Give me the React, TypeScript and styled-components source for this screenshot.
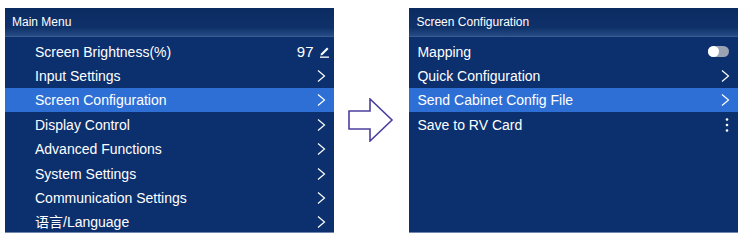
import * as React from 'react';
import styled, { createGlobalStyle } from 'styled-components';

const GlobalStyle = createGlobalStyle`
  html, body {
    margin: 0;
    padding: 0;
    background: #ffffff;
  }
  body {
    font-family: "Liberation Sans", Arial, "Noto Sans CJK SC", sans-serif;
  }
`;

const Page = styled.div`
  width: 745px;
  height: 238px;
  box-sizing: border-box;
  padding: 8px 7px 5px 5px;
  display: flex;
  align-items: stretch;
`;

const Panel = styled.div`
  width: 329px;
  display: flex;
  flex-direction: column;
  background: #0c2f6e;
  border-bottom: 1px solid #6f86ad;
`;

const Header = styled.div`
  height: 29px;
  flex-shrink: 0;
  box-sizing: border-box;
  padding: 0 7px;
  display: flex;
  align-items: center;
  color: #ffffff;
  font-size: 12px;
  background: linear-gradient(to bottom, #0b2a62 0%, #0f3169 70%, #254b85 100%);
  border-bottom: 1px solid #3a5b8f;
`;

const List = styled.div`
  display: flex;
  flex-direction: column;
  padding-top: 2px;
`;

const Row = styled.div<{ $active?: boolean; $indent: number }>`
  height: 24.4px;
  flex-shrink: 0;
  box-sizing: border-box;
  padding: 1px 8px 0 ${p => p.$indent}px;
  display: flex;
  align-items: center;
  justify-content: space-between;
  color: #ffffff;
  font-size: 14px;
  line-height: 16px;
  background: ${p => (p.$active ? '#2e6fd6' : 'transparent')};
`;

const Right = styled.div`
  display: flex;
  align-items: center;
  gap: 5px;
  font-size: 15px;
  margin-right: -4px;
`;

const Between = styled.div`
  width: 76px;
  display: flex;
  align-items: flex-start;
  justify-content: center;
  padding-top: 90px;
`;

const Toggle = styled.div`
  width: 21px;
  height: 11px;
  border-radius: 6px;
  background: #9aa3b3;
  position: relative;
  margin-right: 1px;
  &::before {
    content: '';
    position: absolute;
    left: 0;
    top: 0;
    width: 11px;
    height: 11px;
    border-radius: 50%;
    background: #ffffff;
  }
`;

const Chevron = () => (
  <svg width="10" height="14" viewBox="0 0 10 14">
    <path d="M2 1.5 L8.5 7 L2 12.5" fill="none" stroke="#ffffff" strokeWidth="1.2" />
  </svg>
);

const Pencil = () => (
  <svg width="11" height="14" viewBox="0 0 11 14">
    <path d="M2 8.5 L8 2.5 L9.5 4 L3.5 10 L1.5 10.5 Z" fill="#ffffff" />
    <rect x="1" y="11.5" width="9" height="1.3" fill="#ffffff" />
  </svg>
);

const Dots = () => (
  <svg width="6" height="16" viewBox="0 0 6 16">
    <circle cx="3" cy="2.5" r="1.3" fill="#ffffff" />
    <circle cx="3" cy="8" r="1.3" fill="#ffffff" />
    <circle cx="3" cy="13.5" r="1.3" fill="#ffffff" />
  </svg>
);

const BigArrow = () => (
  <svg width="46" height="44" viewBox="0 0 46 44">
    <path
      d="M1 13 L22 13 L22 1 L44 22 L22 43 L22 31 L1 31 Z"
      fill="#ffffff"
      stroke="#4b3f9e"
      strokeWidth="1.6"
      strokeLinejoin="miter"
    />
  </svg>
);

type Item = { label: string; right: React.ReactNode; active?: boolean };

const mainItems: Item[] = [
  { label: 'Screen Brightness(%)', right: <Right>97<Pencil /></Right> },
  { label: 'Input Settings', right: <Chevron /> },
  { label: 'Screen Configuration', right: <Chevron />, active: true },
  { label: 'Display Control', right: <Chevron /> },
  { label: 'Advanced Functions', right: <Chevron /> },
  { label: 'System Settings', right: <Chevron /> },
  { label: 'Communication Settings', right: <Chevron /> },
  { label: '语言/Language', right: <Chevron /> },
];

const screenItems: Item[] = [
  { label: 'Mapping', right: <Toggle /> },
  { label: 'Quick Configuration', right: <Chevron /> },
  { label: 'Send Cabinet Config File', right: <Chevron />, active: true },
  { label: 'Save to RV Card', right: <Dots /> },
];

function Menu({ title, items, indent }: { title: string; items: Item[]; indent: number }) {
  return (
    <Panel>
      <Header>{title}</Header>
      <List>
        {items.map(item => (
          <Row key={item.label} $active={item.active} $indent={indent}>
            <span>{item.label}</span>
            {item.right}
          </Row>
        ))}
      </List>
    </Panel>
  );
}

export default function App() {
  return (
    <>
      <GlobalStyle />
      <Page>
        <Menu title="Main Menu" items={mainItems} indent={30} />
        <Between>
          <BigArrow />
        </Between>
        <Menu title="Screen Configuration" items={screenItems} indent={8} />
      </Page>
    </>
  );
}
